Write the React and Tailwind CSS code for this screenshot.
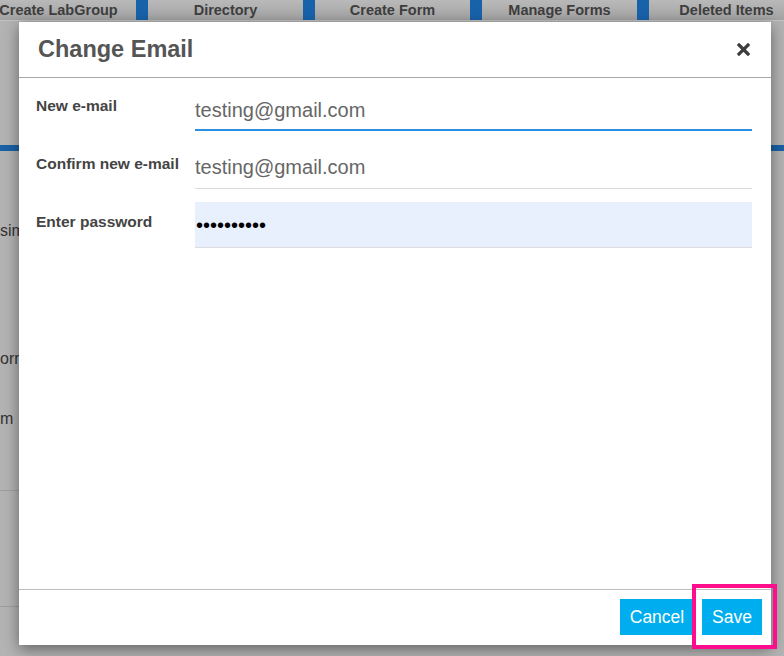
import React from 'react';

const tabs = ['Create LabGroup', 'Directory', 'Create Form', 'Manage Forms', 'Deleted Items'];

function CloseIcon() {
  return (
    <svg width="13" height="13" viewBox="0 0 13 13">
      <path d="M2 2 L11 11 M11 2 L2 11" stroke="#3d3d3d" strokeWidth="3.2" strokeLinecap="square" />
    </svg>
  );
}

function Row({ label, children }) {
  return (
    <div className="flex">
      <div className="w-[159px] shrink-0 pt-[10px] text-[15.5px] font-bold leading-[20px] text-[#444]">{label}</div>
      <div className="flex-1">{children}</div>
    </div>
  );
}

export default function App() {
  return (
    <div className="relative h-[656px] w-[784px] overflow-hidden bg-[#b3b3b3] font-['Liberation_Sans',Arial,sans-serif]">
      {/* page behind the overlay */}
      <div className="ml-[-19px] flex h-[21px] border-b border-[#c2c2c2]">
        {tabs.map((t, i) => (
          <React.Fragment key={t}>
            {i > 0 && <div className="w-[12px] shrink-0 bg-[#1862aa]" />}
            <div className="flex w-[155px] shrink-0 items-center justify-center bg-gradient-to-b from-[#b9b9b9] to-[#a3a3a3] pt-px text-[14.5px] font-bold whitespace-nowrap text-[#3e3e3e]">
              {t}
            </div>
          </React.Fragment>
        ))}
      </div>
      <div className="mt-[124px] h-[6px] bg-[#1a61a6]" />
      <div className="flex w-[40px] flex-col items-start text-[16px] leading-[20px] text-[#333]">
        <div className="mt-[70px]">sim</div>
        <div className="mt-[108px]">orm</div>
        <div className="mt-[40px]">m</div>
      </div>
      <div className="mt-[61px] h-px w-[19px] bg-[#9e9e9e]" />
      <div className="mt-[115px] h-px w-[19px] bg-[#9e9e9e]" />

      {/* modal */}
      <div className="absolute left-[19px] top-[22px] flex h-[623px] w-[752px] flex-col bg-white shadow-[0_4px_14px_rgba(0,0,0,0.45)]">
        <div className="flex h-[56px] shrink-0 items-center justify-between border-b border-[#a8a8a8] pl-[19px] pr-[21px]">
          <span className="text-[23.5px] font-bold text-[#555]">Change Email</span>
          <CloseIcon />
        </div>

        <div className="flex flex-1 flex-col gap-[13px] pl-[17px] pr-[19px] pt-[8px]">
          <Row label="New e-mail">
            <div className="flex h-[45px] items-center border-b-2 border-[#2b8fe2] pt-[4px] text-[20px] text-[#666]">
              testing@gmail.com
            </div>
          </Row>
          <Row label="Confirm new e-mail">
            <div className="flex h-[45px] items-center border-b border-[#dcdcdc] pt-[1px] text-[20px] text-[#666]">
              testing@gmail.com
            </div>
          </Row>
          <Row label="Enter password">
            <div className="flex h-[46px] items-center border-b border-[#dcdcdc] bg-[#e8f0fe] pl-px text-[20px] text-black">
              ••••••••••
            </div>
          </Row>
        </div>

        <div className="flex h-[56px] shrink-0 justify-end gap-[8px] border-t border-[#bcbcbc] pr-[9px] pt-[9px]">
          <button className="h-[36px] w-[74px] bg-[#00aeef] text-[17.5px] text-white">Cancel</button>
          <button className="h-[36px] w-[60px] bg-[#00aeef] text-[17.5px] text-white">Save</button>
        </div>
      </div>

      {/* highlight */}
      <div className="absolute left-[692px] top-[584px] h-[65px] w-[85px] border-4 border-[#ff0d8c]" />
    </div>
  );
}
